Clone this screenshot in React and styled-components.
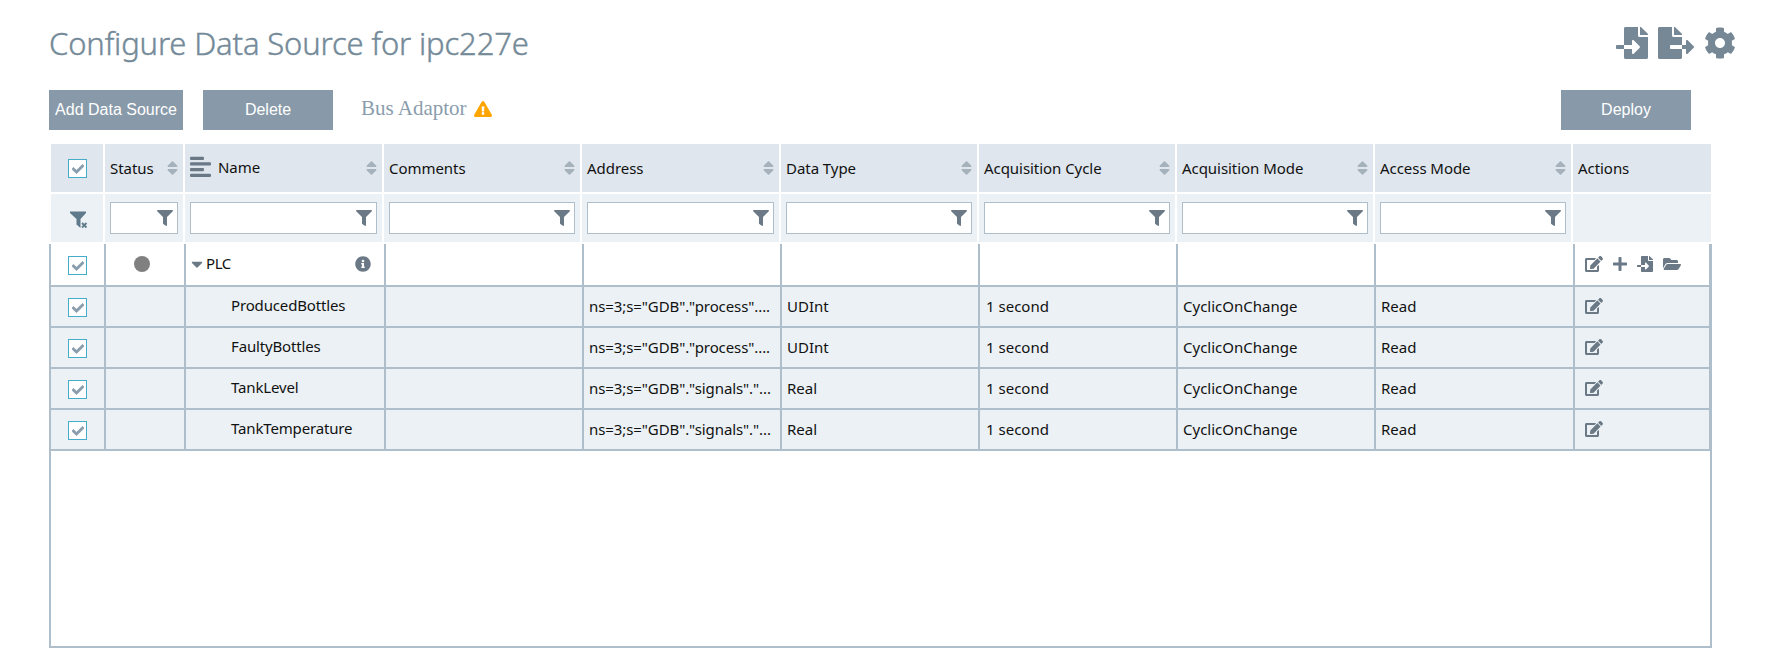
import React from 'react';
import styled, { createGlobalStyle } from 'styled-components';
import { FaFilter, FaSort, FaEdit, FaPlus, FaFileImport, FaFileExport, FaCog, FaFolderOpen, FaInfoCircle, FaCheck, FaExclamationTriangle, FaCaretDown } from 'react-icons/fa';

const Global = createGlobalStyle`
  * { box-sizing: border-box; }
  body { margin: 0; background: #fff; }
`;

const Page = styled.div`
  width: 1784px;
  height: 658px;
  padding: 20px 48px 0 49px;
  color: #111;
  font-family: 'Noto Sans', sans-serif;
  overflow: hidden;
`;

const TitleBar = styled.header`
  display: flex;
  justify-content: space-between;
  height: 70px;
`;

const Title = styled.h1`
  margin: 1px 0 0;
  font-size: 31px;
  line-height: 44px;
  font-weight: 300;
  letter-spacing: -0.15px;
  color: #748a99;
  -webkit-text-stroke: 0.4px #748a99;
  white-space: nowrap;
`;

const TitleActions = styled.div`
  display: flex;
  align-items: flex-start;
  gap: 10px;
  margin-top: 7px;
  color: #768896;
  svg { height: 32px; }
`;

const Toolbar = styled.div`
  display: flex;
  align-items: center;
  height: 40px;
  margin: 0 45px 14px 0;
`;

const Button = styled.button`
  width: ${(p) => p.$width}px;
  height: 40px;
  padding: 0;
  margin: 0 ${(p) => p.$after || 0}px 0 0;
  border: 0;
  background: #889aa9;
  color: #fff;
  font: 16px 'Liberation Sans', sans-serif;
  white-space: nowrap;
`;

const BusStatus = styled.div`
  display: flex;
  flex: 1;
  align-items: center;
  gap: 7px;
  padding-bottom: 2px;
  color: #8a9dac;
  font: 21px 'Liberation Serif', serif;
`;

const BusLabel = styled.span`
  padding-bottom: 2px;
`;

const Table = styled.div`
  width: 1663px;
`;

const HeadRow = styled.div`
  display: grid;
  grid-template-columns: 52px 78px 197px 196px 197px 196px 196px 196px 196px 138px;
  column-gap: 2px;
  height: 48px;
  margin: 0 0 2px 2px;
`;

const HeadCell = styled.div`
  display: flex;
  align-items: center;
  justify-content: space-between;
  padding: 0 5px;
  background: ${(p) => (p.$filter ? '#ecf1f5' : '#dfe6ed')};
  font-size: 15px;
  letter-spacing: -0.05px;
  white-space: nowrap;
`;

const HeadTool = styled(HeadCell)`
  justify-content: flex-start;
  padding: ${(p) => (p.$filter ? '3px 0 0 19px' : '1px 0 0 17px')};
`;

const HeadLabel = styled.span`
  display: flex;
  align-items: center;
  gap: 7px;
  padding-bottom: ${(p) => p.$raise || 0}px;
`;

const SortIcon = styled(FaSort)`
  width: 11px;
  height: 18px;
  color: #a5b1bb;
`;

const FilterBox = styled.div`
  display: flex;
  flex: 1;
  align-items: center;
  justify-content: flex-end;
  height: 32px;
  padding: 0 4px;
  border: 1px solid #aebfcb;
  background: #fff;
  color: #6a7985;
`;

const Body = styled.div`
  height: 404px;
  border: 2px solid #aebfcb;
  border-top: 0;
`;

const Row = styled.div`
  display: grid;
  grid-template-columns: 55px 80px 200px 198px 198px 198px 198px 198px 199px 135px;
  width: 1659px;
  height: ${(p) => (p.$tall ? 43 : 41)}px;
  border-bottom: 2px solid #aebfcb;
  background: ${(p) => (p.$tall ? '#fff' : '#ecf1f5')};
`;

const Cell = styled.div`
  display: flex;
  align-items: center;
  min-width: 0;
  padding: ${(p) => p.$lower || 0}px 0 ${(p) => p.$raise ?? 2}px ${(p) => p.$indent ?? 5}px;
  border-right: 2px solid #aebfcb;
  font-size: 15px;
  letter-spacing: ${(p) => p.$tracking || 0}px;
  white-space: nowrap;
  &:last-child { border-right-width: 1px; }
`;

const Check = styled.span`
  display: flex;
  align-items: center;
  justify-content: center;
  width: 19px;
  height: 19px;
  padding-top: 1px;
  border: 1px solid #45acc9;
  background: #fff;
  color: #8a9dac;
`;

const TickMark = styled(FaCheck)`
  width: 12px;
  height: 12px;
  stroke: currentColor;
  stroke-width: 30px;
`;

const Dot = styled.span`
  width: 16px;
  height: 16px;
  border-radius: 50%;
  background: #808080;
`;

const TreeNode = styled.div`
  display: flex;
  flex: 1;
  align-items: center;
  padding-right: 13px;
  color: #6a7985;
`;

const Caret = styled(FaCaretDown)`
  width: 12px;
  height: 18px;
`;

const NodeName = styled.span`
  flex: 1;
  padding: 0 0 3px 3px;
  color: #111;
  letter-spacing: -0.4px;
`;

const Actions = styled.div`
  display: flex;
  align-items: center;
  gap: 10px;
  color: #6a7985;
`;

const AddIcon = styled(FaPlus)`
  width: 14px;
  height: 16px;
`;

const AlignIcon = () => (
  <svg width="21" height="22" viewBox="0 0 21 22" fill="#6a7985">
    <rect y="0.8" width="14" height="3.3" rx="1" />
    <rect y="6.2" width="21" height="3.3" rx="1" />
    <rect y="12" width="14" height="3.3" rx="1" />
    <rect y="17.8" width="21" height="3.3" rx="1" />
  </svg>
);

const ClearFilter = () => (
  <svg width="18" height="18" viewBox="0 0 18 18" fill="#5f7a8b">
    <path d="M0 0.5h16v1.5L10.5 8v9L6.5 13.5V8L0 2z" />
    <path d="M12 12l4.5 4.5m0-4.5L12 16.5" stroke="#5f7a8b" strokeWidth="1.8" />
  </svg>
);

const Tick = () => (
  <Check><TickMark /></Check>
);

const columns = ['Status', 'Name', 'Comments', 'Address', 'Data Type', 'Acquisition Cycle', 'Acquisition Mode', 'Access Mode'];

const tags = [
  ['ProducedBottles', 'ns=3;s="GDB"."process"....', 'UDInt'],
  ['FaultyBottles', 'ns=3;s="GDB"."process"....', 'UDInt'],
  ['TankLevel', 'ns=3;s="GDB"."signals"."...', 'Real'],
  ['TankTemperature', 'ns=3;s="GDB"."signals"."...', 'Real'],
];

export default function App() {
  return (
    <Page>
      <Global />
      <TitleBar>
        <Title>Configure Data Source for ipc227e</Title>
        <TitleActions>
          <FaFileImport size={32} />
          <FaFileExport size={36} />
          <FaCog size={32} />
        </TitleActions>
      </TitleBar>
      <Toolbar>
        <Button $width={134} $after={20}>Add Data Source</Button>
        <Button $width={130} $after={28}>Delete</Button>
        <BusStatus><BusLabel>Bus Adaptor</BusLabel><FaExclamationTriangle size={18} color="#ffa500" /></BusStatus>
        <Button $width={130}>Deploy</Button>
      </Toolbar>
      <Table>
        <HeadRow>
          <HeadTool><Tick /></HeadTool>
          {columns.map((name) => (
            <HeadCell key={name}>
              <HeadLabel $raise={name === 'Name' ? 2 : 0}>{name === 'Name' && <AlignIcon />}{name}</HeadLabel>
              <SortIcon />
            </HeadCell>
          ))}
          <HeadCell><HeadLabel>Actions</HeadLabel></HeadCell>
        </HeadRow>
        <HeadRow>
          <HeadTool $filter><ClearFilter /></HeadTool>
          {columns.map((name) => (
            <HeadCell key={name} $filter><FilterBox><FaFilter size={16} /></FilterBox></HeadCell>
          ))}
          <HeadCell $filter />
        </HeadRow>
        <Body>
          <Row $tall>
            <Cell $indent={17} $lower={2} $raise={0}><Tick /></Cell>
            <Cell $indent={28} $raise={1}><Dot /></Cell>
            <Cell $raise={1}>
              <TreeNode>
                <Caret />
                <NodeName>PLC</NodeName>
                <FaInfoCircle size={16} />
              </TreeNode>
            </Cell>
            <Cell /><Cell /><Cell /><Cell /><Cell /><Cell />
            <Cell $indent={10} $raise={1}>
              <Actions>
                <FaEdit size={18} />
                <AddIcon />
                <FaFileImport size={16} />
                <FaFolderOpen size={18} />
              </Actions>
            </Cell>
          </Row>
          {tags.map(([name, address, type]) => (
            <Row key={name}>
              <Cell $indent={17} $lower={2} $raise={0}><Tick /></Cell>
              <Cell />
              <Cell $indent={45} $raise={4} $tracking={-0.15}>{name}</Cell>
              <Cell />
              <Cell $tracking={-0.09}>{address}</Cell>
              <Cell>{type}</Cell>
              <Cell $indent={6}>1 second</Cell>
              <Cell>CyclicOnChange</Cell>
              <Cell>Read</Cell>
              <Cell $indent={10} $raise={1}><Actions><FaEdit size={18} /></Actions></Cell>
            </Row>
          ))}
        </Body>
      </Table>
    </Page>
  );
}
